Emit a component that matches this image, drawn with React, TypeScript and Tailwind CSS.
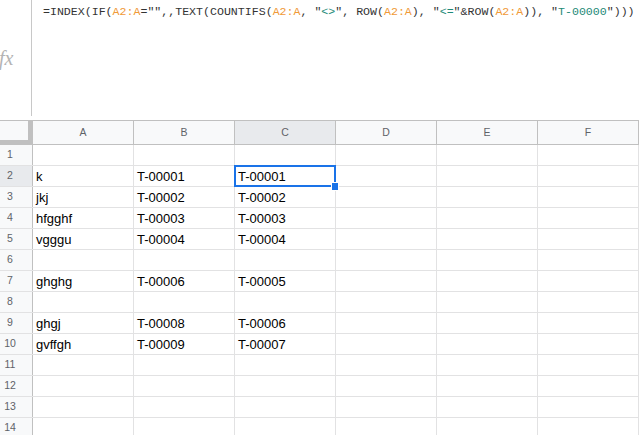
import React from 'react';

const COLS = ['A', 'B', 'C', 'D', 'E', 'F'];

const ROWS: Record<number, string[]> = {
  2: ['k', 'T-00001', 'T-00001'],
  3: ['jkj', 'T-00002', 'T-00002'],
  4: ['hfgghf', 'T-00003', 'T-00003'],
  5: ['vgggu', 'T-00004', 'T-00004'],
  7: ['ghghg', 'T-00006', 'T-00005'],
  9: ['ghgj', 'T-00008', 'T-00006'],
  10: ['gvffgh', 'T-00009', 'T-00007'],
};

const Rng: React.FC<{ children: React.ReactNode }> = ({ children }) => (
  <span className="text-[#f09a38]">{children}</span>
);

const Str: React.FC<{ children: React.ReactNode }> = ({ children }) => (
  <span>
    "<span className="text-[#1e8a78]">{children}</span>"
  </span>
);

const FormulaBar: React.FC = () => (
  <div className="flex h-[120px]">
    <div className="w-[31px] h-[116px] flex items-center">
      <span className="font-['Liberation_Serif',serif] italic text-[20px] text-[#b4b4b4] leading-none -ml-[1px]">
        fx
      </span>
    </div>
    <div className="w-px h-[116px] bg-[#c8c8c8]" />
    <div className="pl-[11px] pt-[4px] font-['Liberation_Mono',monospace] text-[11.6px] leading-[16px] text-[#333] whitespace-pre">
      =INDEX(IF(<Rng>A2:A</Rng>="",,TEXT(COUNTIFS(<Rng>A2:A</Rng>, <Str>{'<>'}</Str>, ROW(<Rng>A2:A</Rng>), <Str>{'<='}</Str>&ROW(<Rng>A2:A</Rng>)), <Str>T-00000</Str>)))
    </div>
  </div>
);

const HeaderRow: React.FC = () => (
  <div className="flex h-[25px] border-t border-b border-[#c0c0c0] bg-[#f8f9fa]">
    <div className="w-[33px] h-[24px] border-r-[5px] border-b-[5px] border-[#c0c0c0] bg-[#f8f9fa]" />
    {COLS.map((c) => (
      <div
        key={c}
        className={`w-[101px] flex items-center justify-center border-r border-[#c0c0c0] text-[10.5px] text-[#5f6368] font-['Liberation_Sans',Arial,sans-serif] ${
          c === 'C' ? 'bg-[#e8eaed]' : ''
        }`}
      >
        {c}
      </div>
    ))}
  </div>
);

const Row: React.FC<{ n: number }> = ({ n }) => {
  const vals = ROWS[n] || [];
  return (
    <div className="flex h-[21px] border-b border-[#e2e2e3]">
      <div
        className={`w-[33px] flex items-center border-r border-[#c0c0c0] text-[10.5px] text-[#5f6368] font-['Liberation_Sans',Arial,sans-serif] ${
          n === 2 ? 'bg-[#e8eaed]' : 'bg-[#f8f9fa]'
        }`}
      >
        <span className="w-[20px] text-center">{n}</span>
      </div>
      {COLS.map((c, i) => (
        <div
          key={c}
          className="w-[101px] flex items-end pl-[3px] pb-[2px] border-r border-[#e2e2e3] text-[13px] leading-[15px] text-black font-['Liberation_Sans',Arial,sans-serif] whitespace-nowrap overflow-hidden"
        >
          {vals[i] || ''}
        </div>
      ))}
    </div>
  );
};

export default function App() {
  const rows = Array.from({ length: 14 }, (_, i) => i + 1);
  return (
    <div className="w-[639px] h-[435px] overflow-hidden bg-white relative">
      <FormulaBar />
      <HeaderRow />
      <div className="relative">
        {rows.map((n) => (
          <Row key={n} n={n} />
        ))}
        {/* active cell selection C2 */}
        <div className="absolute left-[234px] top-[20px] w-[102px] h-[22px] border-2 border-[#1a73e8] pointer-events-none" />
        <div className="absolute left-[332px] top-[38px] w-[6px] h-[7px] bg-[#1a73e8] border border-white box-content -ml-px -mt-px" />
      </div>
    </div>
  );
}
